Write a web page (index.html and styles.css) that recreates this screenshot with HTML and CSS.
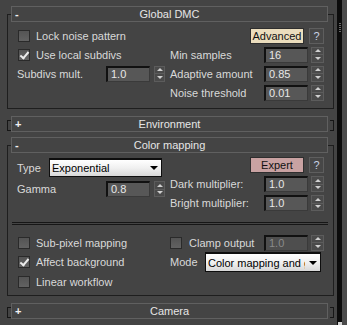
FILE: index.html
```html
<!DOCTYPE html>
<html lang="en">

<head>
    <meta charset="UTF-8">
    <meta name="viewport" content="width=device-width, initial-scale=1.0">
    <title>Render Setup - V-Ray</title>
    <link rel="stylesheet" href="styles.css">
</head>

<body>

    <div class="panel">
        <div class="rollouts">

            <!-- Global DMC -->
            <div class="rollout">
                <div class="rollout-head"><span class="sign">-</span><span class="title">Global DMC</span><span></span></div>
                <div class="rollout-frame">
                    <div class="grid dmc">
                        <label class="check"><span class="box"></span>Lock noise pattern</label>
                        <div class="row buttons">
                            <span class="btn btn-adv">Advanced</span>
                            <span class="btn btn-help">?</span>
                        </div>

                        <label class="check"><span class="box checked"></span>Use local subdivs</label>
                        <div class="row">
                            <span class="label">Min samples</span>
                            <span class="field">16</span>
                            <span class="spinner"><i></i><i></i></span>
                        </div>

                        <div class="row left-spin">
                            <span class="label">Subdivs mult.</span>
                            <span class="field">1.0</span>
                            <span class="spinner"><i></i><i></i></span>
                        </div>
                        <div class="row">
                            <span class="label">Adaptive amount</span>
                            <span class="field">0.85</span>
                            <span class="spinner"><i></i><i></i></span>
                        </div>

                        <div></div>
                        <div class="row">
                            <span class="label">Noise threshold</span>
                            <span class="field">0.01</span>
                            <span class="spinner"><i></i><i></i></span>
                        </div>
                    </div>
                </div>
            </div>

            <!-- Environment -->
            <div class="rollout closed env">
                <div class="rollout-head"><span class="sign">+</span><span class="title">Environment</span><span></span></div>
            </div>

            <!-- Color mapping -->
            <div class="rollout cmap">
                <div class="rollout-head"><span class="sign">-</span><span class="title">Color mapping</span><span></span></div>
                <div class="rollout-frame">
                    <div class="grid cm-top">
                        <div class="col">
                            <div class="row type-row">
                                <span class="label">Type</span>
                                <span class="dropdown type-drop"><span class="drop-text">Exponential</span><span class="drop-arrow"></span></span>
                            </div>
                            <div class="row left-spin gamma-row">
                                <span class="label">Gamma</span>
                                <span class="field">0.8</span>
                                <span class="spinner"><i></i><i></i></span>
                            </div>
                        </div>
                        <div class="col right-col">
                            <div class="row buttons">
                                <span class="btn btn-exp">Expert</span>
                                <span class="btn btn-help">?</span>
                            </div>
                            <div class="row">
                                <span class="label">Dark multiplier:</span>
                                <span class="field">1.0</span>
                                <span class="spinner"><i></i><i></i></span>
                            </div>
                            <div class="row">
                                <span class="label">Bright multiplier:</span>
                                <span class="field">1.0</span>
                                <span class="spinner"><i></i><i></i></span>
                            </div>
                        </div>
                    </div>

                    <div class="separator"></div>

                    <div class="grid cm-bottom">
                        <label class="check"><span class="box"></span>Sub-pixel mapping</label>
                        <div class="row">
                            <label class="check clamp"><span class="box"></span>Clamp output</label>
                            <span class="field disabled">1.0</span>
                            <span class="spinner"><i></i><i></i></span>
                        </div>

                        <label class="check"><span class="box checked"></span>Affect background</label>
                        <div class="row">
                            <span class="label">Mode</span>
                            <span class="dropdown mode-drop"><span class="drop-text">Color mapping and gamma</span><span class="drop-arrow"></span></span>
                        </div>

                        <label class="check"><span class="box"></span>Linear workflow</label>
                        <div></div>
                    </div>
                </div>
            </div>

            <!-- Camera -->
            <div class="rollout closed camera">
                <div class="rollout-head"><span class="sign">+</span><span class="title">Camera</span><span></span></div>
            </div>

        </div>

        <div class="scrollbar">
            <div class="grip"></div>
            <div class="thumb-end"></div>
        </div>
        <div class="edge"></div>
    </div>

</body>

</html>
```

FILE: styles.css
```css
* {
    box-sizing: border-box;
}

body {
    margin: 0;
    background-color: #444444;
    font-family: "Liberation Sans", Arial, sans-serif;
    font-size: 11px;
    color: #d9d9d9;
}

.panel {
    display: flex;
    width: 347px;
    height: 325px;
    overflow: hidden;
}

.rollouts {
    width: 337px;
    padding-top: 6px;
}

/* rollouts */

.rollout {
    position: relative;
    width: 327px;
    margin-left: 7px;
}

.env {
    margin-top: 7px;
}

.cmap {
    margin-top: 5px;
}

.camera {
    margin-top: 7px;
}

.rollout-head {
    position: relative;
    z-index: 1;
    display: grid;
    grid-template-columns: 16px 1fr 16px;
    align-items: center;
    height: 16px;
    margin: 0 6px 0 4px;
    border: 1px solid #606060;
    background-color: #444444;
    color: #e6e6e6;
    line-height: 14px;
}

.sign {
    padding-left: 3px;
    color: #f2f2f2;
    font-weight: bold;
}

.title {
    text-align: center;
}

.rollout-frame {
    margin-top: -8px;
    border: 1px solid #1e1e1e;
}

.closed::before,
.closed::after {
    content: "";
    position: absolute;
    top: 4px;
    width: 3px;
    height: 9px;
    border: 1px solid #161616;
}

.closed::before {
    left: 0;
    border-right: none;
}

.closed::after {
    right: 0;
    border-left: none;
}

/* body layout */

.grid {
    display: grid;
    grid-template-columns: 148px 154px;
    column-gap: 5px;
    padding-left: 9px;
}

.dmc {
    grid-auto-rows: 19px;
    padding-top: 11px;
    padding-bottom: 6px;
}

.cm-top {
    align-items: start;
    padding-top: 11px;
}

.cm-bottom {
    grid-template-rows: 19px 20px 20px;
    margin-top: 8px;
    padding-bottom: 3px;
}

.col {
    display: flex;
    flex-direction: column;
}

.right-col {
    gap: 3px;
}

.row {
    display: flex;
    align-items: center;
}

.right-col .row {
    height: 16px;
}

.label {
    flex: 1;
    white-space: nowrap;
}

.type-row {
    height: 21px;
}

.gamma-row {
    height: 16px;
    margin-top: 3px;
}

.separator {
    height: 3px;
    margin: 11px 5px 0 4px;
    border-top: 1px solid #161616;
    border-bottom: 1px solid #161616;
}

/* checkboxes */

.check {
    display: flex;
    align-items: center;
    gap: 6px;
    padding-left: 1px;
    white-space: nowrap;
}

.box {
    position: relative;
    width: 12px;
    height: 12px;
    border: 1px solid #2a2a2a;
    background: linear-gradient(#545454, #626262);
}

.box.checked::after {
    content: "";
    position: absolute;
    left: 3px;
    top: 0px;
    width: 3px;
    height: 7px;
    border-right: 2px solid #ececec;
    border-bottom: 2px solid #ececec;
    transform: rotate(40deg);
}

.clamp {
    flex: 1;
    gap: 7px;
    padding-left: 0;
}

/* spinners and fields */

.field {
    width: 44px;
    height: 16px;
    padding-left: 3px;
    border-top: 2px solid #111111;
    border-left: 2px solid #111111;
    border-right: 1px solid #3a3a3a;
    border-bottom: 1px solid #3a3a3a;
    background-color: #575757;
    color: #e8e8e8;
    line-height: 13px;
}

.field.disabled {
    background-color: #4e4e4e;
    color: #8a8a8a;
}

.spinner {
    display: flex;
    flex-direction: column;
    width: 13px;
    height: 16px;
    margin-left: 3px;
    border: 1px solid #5c5c5c;
    background-color: #4a4a4a;
}

.left-spin .spinner {
    width: 11px;
    margin-left: 4px;
}

.spinner i {
    flex: 1;
    display: flex;
    align-items: center;
    justify-content: center;
}

.spinner i + i {
    border-top: 1px solid #5c5c5c;
}

.spinner i::after {
    content: "";
    border-left: 3px solid transparent;
    border-right: 3px solid transparent;
}

.spinner i:first-child::after {
    border-bottom: 3px solid #d0d0d0;
}

.spinner i:last-child::after {
    border-top: 3px solid #d0d0d0;
}

/* buttons */

.buttons {
    justify-content: flex-end;
    gap: 5px;
}

.btn {
    display: flex;
    align-items: center;
    justify-content: center;
    height: 16px;
    color: #111111;
}

.btn-adv {
    width: 54px;
    background-color: #ebddbd;
    border: 1px solid #2e2e2e;
}

.btn-exp {
    width: 54px;
    background-color: #c9a2a2;
    border: 1px solid #2e2e2e;
}

.btn-help {
    width: 15px;
    background-color: #474747;
    border: 1px solid #5e5e5e;
    color: #c9d2e6;
}

/* dropdowns */

.dropdown {
    display: flex;
    align-items: center;
    height: 19px;
    border: 1px solid #0e0e0e;
    border-top-width: 2px;
    background: linear-gradient(#ffffff, #f0f0f0 50%, #d8d8d8);
    color: #000000;
}

.type-drop {
    width: 113px;
    margin-right: 3px;
}

.mode-drop {
    width: 116px;
    height: 20px;
    margin-right: 3px;
}

.drop-text {
    flex: 1;
    overflow: hidden;
    padding-left: 2px;
    white-space: nowrap;
}

.drop-arrow {
    width: 15px;
    display: flex;
    justify-content: center;
}

.drop-arrow::after {
    content: "";
    border-left: 4px solid transparent;
    border-right: 4px solid transparent;
    border-top: 4px solid #000000;
}

/* scrollbar */

.scrollbar {
    display: flex;
    flex-direction: column;
    width: 5px;
    background-color: #0b0b0b;
}

.grip {
    height: 10px;
    margin: 23px 1px 0 2px;
    background: repeating-linear-gradient(#6a6a6a 0 1px, transparent 1px 2px);
}

.thumb-end {
    height: 3px;
    margin-top: auto;
    margin-left: 1px;
    background-color: #d4d4d4;
}

.edge {
    width: 5px;
    background-color: #4b4b4b;
}
```
